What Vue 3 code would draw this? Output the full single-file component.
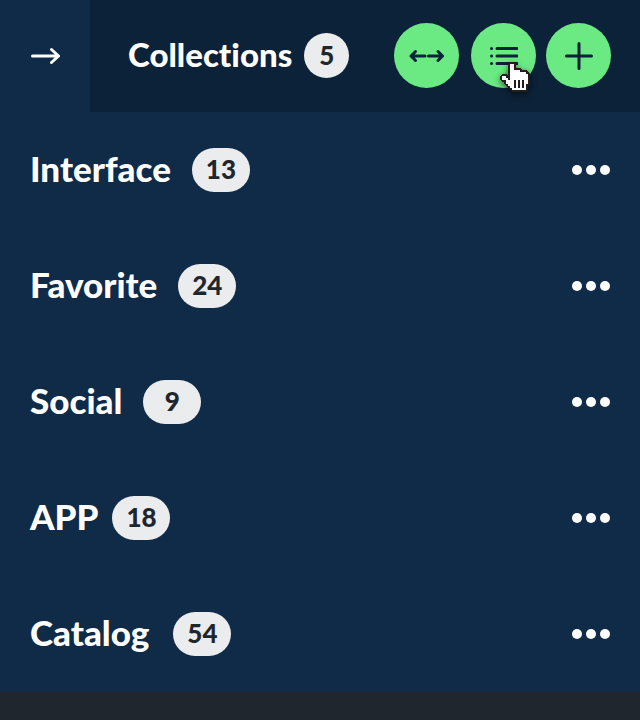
<script setup>
const collections = [
  { name: 'Interface', count: 13, gap: 'mid' },
  { name: 'Favorite', count: 24, gap: 'mid' },
  { name: 'Social', count: 9, gap: 'mid' },
  { name: 'APP', count: 18, gap: 'narrow' },
  { name: 'Catalog', count: 54, gap: 'wide' },
]
</script>

<template>
  <main class="panel">
    <header class="header">
      <button class="collapse" type="button" aria-label="Collapse">
        <svg width="30" height="18" viewBox="0 0 30 18"><path d="M2.5 9H28.5M21.5 2.5l7 6.5-7 6.5" /></svg>
      </button>
      <div class="bar">
        <h1 class="title">Collections</h1>
        <span class="badge round">{{ collections.length }}</span>
        <div class="actions">
          <button class="action" type="button" aria-label="Resize">
            <svg width="37" height="15" viewBox="0 0 37 15"><path d="M17 8H3M7.5 3.5L3 8l4.5 4.5M20.5 8h14M30 3.5l4.5 4.5-4.5 4.5" /></svg>
          </button>
          <button class="action list" type="button" aria-label="List view">
            <svg width="28" height="19" viewBox="0 0 28 19"><path d="M1.5 2.5h.1M7 2.5h20M1.5 10h.1M7 10h20M1.5 17.5h.1M7 17.5h20" /></svg>
            <svg class="cursor" width="30" height="32" viewBox="0 0 15 16" shape-rendering="crispEdges">
              <path class="hand" d="M5 1h2v3h3v1h3v1h1v5h-1v3H6v-1H5v-1H4v-1H3v-2H2V9H1V7h2v1h1v1h1z" />
              <path class="slit" d="M7 9h1v4H7zM9 9h1v4H9zM11 9h1v4h-1z" />
            </svg>
          </button>
          <button class="action" type="button" aria-label="Add collection">
            <svg width="29" height="29" viewBox="0 0 29 29"><path d="M15 2.5v25M2.5 15h25" /></svg>
          </button>
        </div>
      </div>
    </header>
    <ul class="rows">
      <li v-for="item in collections" :key="item.name" class="row">
        <h2 class="name" :class="item.gap">{{ item.name }}</h2>
        <span class="badge">{{ item.count }}</span>
        <button class="more" type="button" :aria-label="`Options for ${item.name}`">
          <i></i><i></i><i></i>
        </button>
      </li>
    </ul>
  </main>
</template>

<style>
body { background: #1f262d; }
</style>

<style scoped>
.panel { background: #102b48; color: #fff; font-family: Lato, "Liberation Sans", sans-serif; font-variant-ligatures: none; }
button { padding: 0; border: 0; background: none; cursor: pointer; }
svg { display: block; fill: none; stroke: currentColor; stroke-width: 3; stroke-linecap: round; stroke-linejoin: round; }
.header { display: flex; height: 112px; }
.collapse { width: 90px; display: grid; place-items: center; color: #fff; }
.bar { flex: 1; display: flex; align-items: center; padding: 0 29px 2px 38px; background: #0c2238; }
.title, .name { margin: 0; font-weight: 900; line-height: 44px; white-space: nowrap; }
.title { font-size: 33px; margin-right: 12px; padding-bottom: 2px; }
.badge { display: grid; place-items: center; box-sizing: border-box; width: 58px; height: 44px; padding-bottom: 2px; border-radius: 22px; background: #ebecee; color: #1f262d; font-size: 26px; font-weight: 900; line-height: 30px; }
.round { width: 45px; height: 45px; padding-bottom: 0; border-radius: 50%; }
.actions { display: flex; gap: 10px; margin-left: auto; }
.action { position: relative; display: grid; place-items: center; width: 65px; height: 65px; border-radius: 50%; background: #6bea84; color: #0c2238; }
.list { margin-left: 2px; }
.cursor { position: absolute; left: 29px; top: 39px; overflow: visible; stroke: none; filter: drop-shadow(0 2px 3px rgba(0, 0, 0, 0.6)); }
.hand { fill: #fff; stroke: #231f20; stroke-width: 2; stroke-linejoin: bevel; paint-order: stroke; }
.slit { fill: #231f20; }
.rows { margin: 0; padding: 0; list-style: none; }
.row { display: flex; align-items: center; height: 116px; padding: 0 30px; }
.name { font-size: 35px; padding-bottom: 4px; }
.wide { margin-right: 24px; }
.mid { margin-right: 21px; }
.narrow { margin-right: 14px; }
.more { display: flex; gap: 4px; margin-left: auto; }
.more i { width: 10px; height: 10px; border-radius: 50%; background: #fff; }
</style>
